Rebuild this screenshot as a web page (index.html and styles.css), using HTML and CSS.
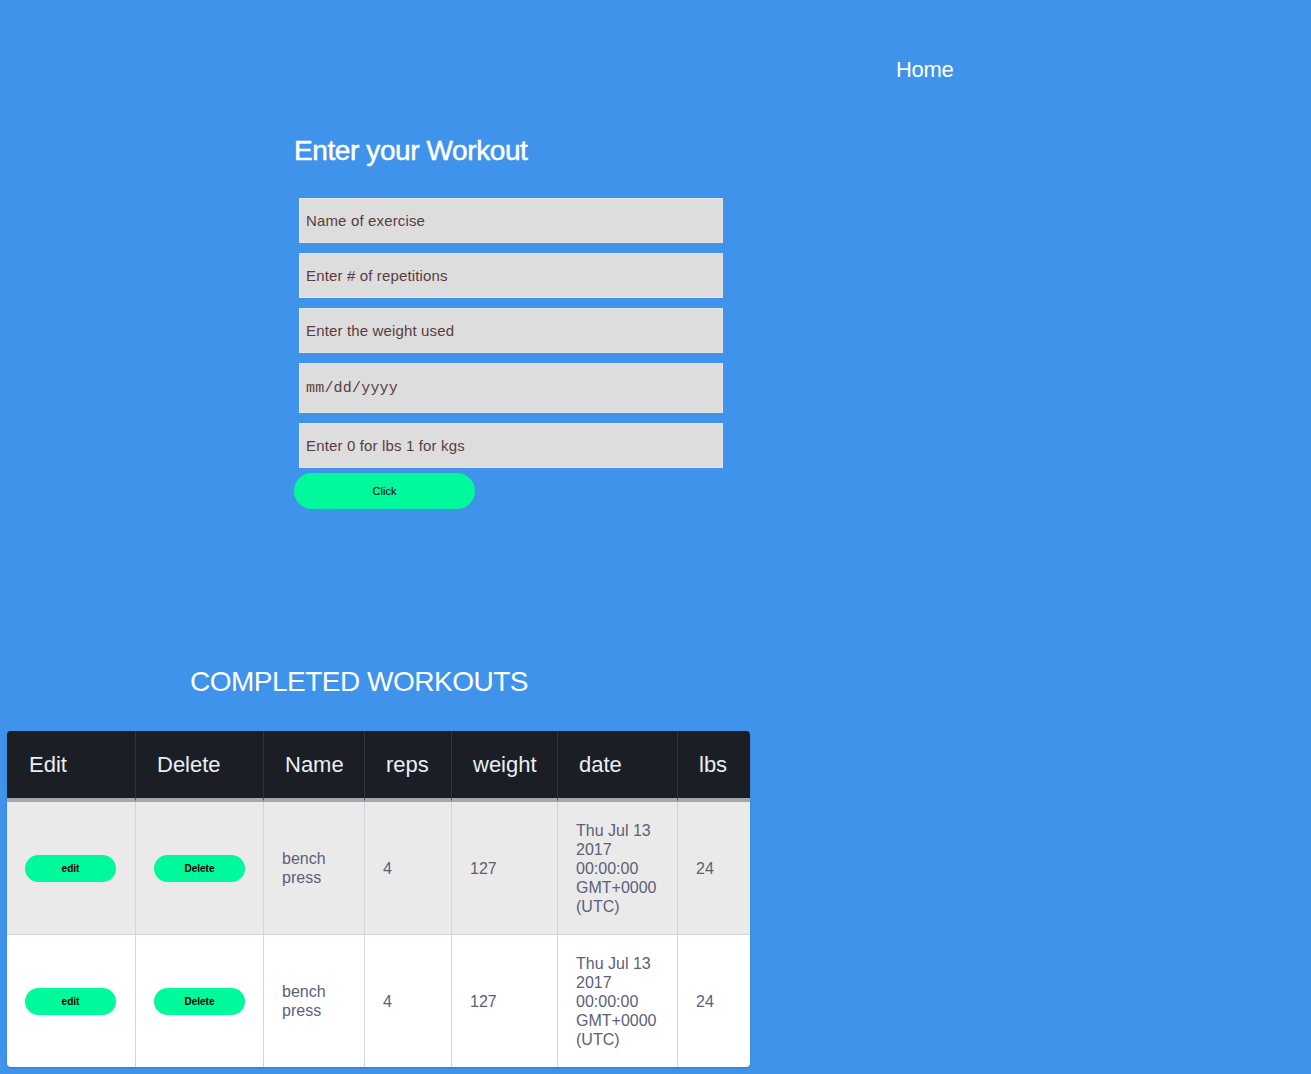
FILE: index.html
```html
<!DOCTYPE html>
<html lang="en">
<head>
<meta charset="utf-8">
<title>Workout Tracker</title>
<link rel="stylesheet" href="styles.css">
</head>
<body>
<header class="topbar">
  <a class="home-link" href="#">Home</a>
</header>

<section class="entry">
  <h2 class="entry-title">Enter your Workout</h2>
  <form class="entry-form">
    <input class="field" type="text" placeholder="Name of exercise">
    <input class="field" type="text" placeholder="Enter # of repetitions">
    <input class="field" type="text" placeholder="Enter the weight used">
    <input class="field field-date" type="text" placeholder="mm/dd/yyyy">
    <input class="field" type="text" placeholder="Enter 0 for lbs 1 for kgs">
    <button class="submit-btn" type="button">Click</button>
  </form>
</section>

<section class="completed">
  <h2 class="completed-title">COMPLETED WORKOUTS</h2>
  <div class="table-wrap">
    <table class="workouts">
      <colgroup>
        <col class="c-edit">
        <col class="c-delete">
        <col class="c-name">
        <col class="c-reps">
        <col class="c-weight">
        <col class="c-date">
        <col class="c-lbs">
      </colgroup>
      <thead>
        <tr>
          <th>Edit</th>
          <th>Delete</th>
          <th>Name</th>
          <th>reps</th>
          <th>weight</th>
          <th>date</th>
          <th>lbs</th>
        </tr>
      </thead>
      <tbody>
        <tr class="row-alt">
          <td><button class="row-btn" type="button">edit</button></td>
          <td><button class="row-btn" type="button">Delete</button></td>
          <td>bench press</td>
          <td>4</td>
          <td>127</td>
          <td>Thu Jul 13 2017 00:00:00 GMT+0000 (UTC)</td>
          <td>24</td>
        </tr>
        <tr>
          <td><button class="row-btn" type="button">edit</button></td>
          <td><button class="row-btn" type="button">Delete</button></td>
          <td>bench press</td>
          <td>4</td>
          <td>127</td>
          <td>Thu Jul 13 2017 00:00:00 GMT+0000 (UTC)</td>
          <td>24</td>
        </tr>
      </tbody>
    </table>
  </div>
</section>
</body>
</html>
```

FILE: styles.css
```css
html, body {
  margin: 0;
  padding: 0;
}

body {
  background: #3f93eb;
  font-family: "Liberation Sans", Arial, sans-serif;
  color: #ffffff;
  min-height: 1074px;
}

.topbar {
  display: flex;
  padding: 57px 0 0 896px;
}

.home-link {
  font-size: 22px;
  line-height: 26px;
  color: #ffffff;
  text-decoration: none;
  letter-spacing: -0.3px;
}

.entry {
  margin: 52px 0 0 294px;
}

.entry-title {
  margin: 0;
  font-size: 28px;
  line-height: 32px;
  font-weight: 400;
  letter-spacing: -0.4px;
  color: #ffffff;
  -webkit-text-stroke: 0.5px #ffffff;
}

.entry-form {
  margin-top: 31px;
  display: flex;
  flex-direction: column;
  align-items: flex-start;
  gap: 10px;
}

.field {
  box-sizing: border-box;
  width: 424px;
  height: 45px;
  margin-left: 5px;
  padding: 0 6px;
  border: 1px solid #e4e4e4;
  background: #dddddd;
  font-family: "Liberation Sans", Arial, sans-serif;
  font-size: 15px;
  letter-spacing: 0.15px;
  color: #553a3c;
  outline: none;
}

.field::placeholder {
  color: #5a3c3e;
  opacity: 1;
}

.field-date {
  height: 50px;
  font-family: "Liberation Mono", "Courier New", monospace;
  font-size: 15px;
  letter-spacing: 0.2px;
}

.submit-btn {
  margin-top: -5px;
  width: 181px;
  height: 36px;
  border: none;
  border-radius: 18px;
  background: #00f99b;
  font-family: "Liberation Sans", Arial, sans-serif;
  font-size: 11px;
  color: #000000;
}

.completed {
  margin-top: 157px;
}

.completed-title {
  margin: 0 0 0 190px;
  font-size: 28px;
  line-height: 32px;
  font-weight: 400;
  letter-spacing: -0.5px;
  color: #ffffff;
}

.table-wrap {
  margin: 33px 0 0 7px;
  width: 743px;
  border-radius: 4px;
  overflow: hidden;
  box-shadow: 0 1px 2px rgba(0, 0, 0, 0.15);
}

.workouts {
  width: 743px;
  table-layout: fixed;
  border-collapse: separate;
  border-spacing: 0;
}

.c-edit { width: 128px; }
.c-delete { width: 128px; }
.c-name { width: 101px; }
.c-reps { width: 87px; }
.c-weight { width: 106px; }
.c-date { width: 120px; }
.c-lbs { width: 73px; }

.workouts th {
  height: 71px;
  padding: 0 0 0 21px;
  box-sizing: border-box;
  background: #1c1e25;
  color: #e9eef4;
  font-size: 22px;
  font-weight: 400;
  text-align: left;
  border-left: 1px solid #30343c;
  border-bottom: 4px solid #a3a9b1;
}

.workouts th:first-child {
  padding-left: 22px;
}

.workouts td {
  height: 132px;
  padding: 0 18px;
  box-sizing: border-box;
  background: #ffffff;
  color: #5c6078;
  font-size: 16px;
  line-height: 19px;
  vertical-align: middle;
  border-left: 1px solid #d3d4de;
}

.workouts th:first-child,
.workouts td:first-child {
  border-left: none;
}

.workouts .row-alt td {
  background: #eaeaea;
  border-bottom: 1px solid #d3d4de;
  height: 133px;
}

.row-btn {
  display: block;
  width: 91px;
  height: 27px;
  border: none;
  border-radius: 14px;
  background: #00f99b;
  font-family: "Liberation Sans", Arial, sans-serif;
  font-size: 10px;
  font-weight: 700;
  color: #000000;
}
```
